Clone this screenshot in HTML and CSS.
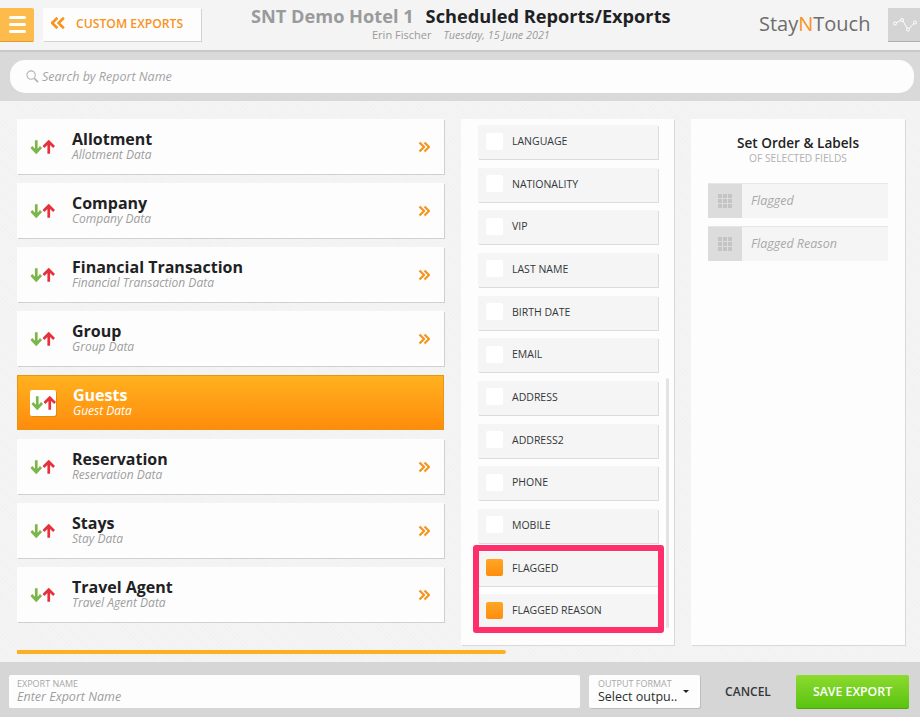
FILE: index.html
```html
<!DOCTYPE html>
<html lang="en">
<head>
<meta charset="utf-8">
<title>Scheduled Reports/Exports</title>
<link rel="stylesheet" href="styles.css">
</head>
<body>
<svg class="defs" width="0" height="0" aria-hidden="true">
  <symbol id="arrows" viewBox="0 0 26 16">
    <path d="M6.500 1v12M1.500 8l5 5.500 5-5.500" fill="none" stroke="#7ab648" stroke-width="2.800"/>
    <path d="M19.500 15V2.500M14 8l5.500-5.500L25 8" fill="none" stroke="#e8303a" stroke-width="2.800"/>
  </symbol>
  <symbol id="chev" viewBox="0 0 12 12">
    <path d="M1.500 1.500 6 6l-4.500 4.500M6.500 1.500 11 6l-4.500 4.500" fill="none" stroke="#f7931e" stroke-width="2.200"/>
  </symbol>
  <symbol id="grip" viewBox="0 0 14 14">
    <path d="M0 0h4v4H0zM5 0h4v4H5zM10 0h4v4h-4zM0 5h4v4H0zM5 5h4v4H5zM10 5h4v4h-4zM0 10h4v4H0zM5 10h4v4H5zM10 10h4v4h-4z" fill="#c4c4c4"/>
  </symbol>
</svg>
<div class="app">
  <header class="top">
    <button class="menu" aria-label="Menu"><span></span><span></span><span></span></button>
    <button class="back">
      <svg class="back-icon" viewBox="0 0 12 12"><path d="M5.500 1.500 1 6l4.500 4.500M11 1.500 6.500 6l4.500 4.500" fill="none" stroke="#f7931e" stroke-width="2.200"/></svg>
      <span>CUSTOM EXPORTS</span>
    </button>
    <div class="title-block">
      <div class="titles"><span class="hotel">SNT Demo Hotel 1</span><span class="page-title">Scheduled Reports/Exports</span></div>
      <div class="sub"><span class="user">Erin Fischer</span><span class="date">Tuesday, 15 June 2021</span></div>
    </div>
    <div class="logo">Stay<span class="logo-n">N</span>Touch</div>
    <button class="pulse" aria-label="Activity">
      <svg viewBox="0 0 24 14" width="24" height="14"><path d="M2 5.500 9 1.500l6 10 7-7" fill="none" stroke="#fff" stroke-width="1"/><g fill="#d4d4d4" stroke="#fff" stroke-width="1"><circle cx="2" cy="5.500" r="1.500"/><circle cx="9" cy="2" r="1.500"/><circle cx="15" cy="11.500" r="1.500"/><circle cx="22" cy="4.500" r="1.500"/></g></svg>
    </button>
  </header>

  <div class="search-band">
    <div class="search">
      <svg class="search-icon" viewBox="0 0 14 14"><circle cx="5.500" cy="5.500" r="4.500" fill="none" stroke="#b5b5b5" stroke-width="1.200"/><path d="M9 9l4 4" stroke="#b5b5b5" stroke-width="2"/></svg>
      <span>Search by Report Name</span>
    </div>
  </div>

  <main class="main">
    <div class="columns">
      <section class="reports">
        <a class="report"><svg class="arrows"><use href="#arrows"/></svg><div class="report-text"><h3>Allotment</h3><p>Allotment Data</p></div><svg class="chev"><use href="#chev"/></svg></a>
        <a class="report"><svg class="arrows"><use href="#arrows"/></svg><div class="report-text"><h3>Company</h3><p>Company Data</p></div><svg class="chev"><use href="#chev"/></svg></a>
        <a class="report"><svg class="arrows"><use href="#arrows"/></svg><div class="report-text"><h3>Financial Transaction</h3><p>Financial Transaction Data</p></div><svg class="chev"><use href="#chev"/></svg></a>
        <a class="report"><svg class="arrows"><use href="#arrows"/></svg><div class="report-text"><h3>Group</h3><p>Group Data</p></div><svg class="chev"><use href="#chev"/></svg></a>
        <a class="report active"><span class="arrow-box"><svg class="arrows"><use href="#arrows"/></svg></span><div class="report-text"><h3>Guests</h3><p>Guest Data</p></div></a>
        <a class="report"><svg class="arrows"><use href="#arrows"/></svg><div class="report-text"><h3>Reservation</h3><p>Reservation Data</p></div><svg class="chev"><use href="#chev"/></svg></a>
        <a class="report"><svg class="arrows"><use href="#arrows"/></svg><div class="report-text"><h3>Stays</h3><p>Stay Data</p></div><svg class="chev"><use href="#chev"/></svg></a>
        <a class="report"><svg class="arrows"><use href="#arrows"/></svg><div class="report-text"><h3>Travel Agent</h3><p>Travel Agent Data</p></div><svg class="chev"><use href="#chev"/></svg></a>
      </section>

      <section class="fields">
        <div class="field"><i class="check"></i>LANGUAGE</div>
        <div class="field"><i class="check"></i>NATIONALITY</div>
        <div class="field"><i class="check"></i>VIP</div>
        <div class="field"><i class="check"></i>LAST NAME</div>
        <div class="field"><i class="check"></i>BIRTH DATE</div>
        <div class="field"><i class="check"></i>EMAIL</div>
        <div class="field"><i class="check"></i>ADDRESS</div>
        <div class="field"><i class="check"></i>ADDRESS2</div>
        <div class="field"><i class="check"></i>PHONE</div>
        <div class="field"><i class="check"></i>MOBILE</div>
        <div class="field"><i class="check on"></i>FLAGGED</div>
        <div class="field"><i class="check on"></i>FLAGGED REASON</div>
        <div class="scrollbar"></div>
        <div class="highlight"></div>
      </section>

      <section class="order">
        <h2>Set Order &amp; Labels</h2>
        <p class="order-sub">OF SELECTED FIELDS</p>
        <div class="label-row"><span class="grip"><svg><use href="#grip"/></svg></span><span class="label-text">Flagged</span></div>
        <div class="label-row"><span class="grip"><svg><use href="#grip"/></svg></span><span class="label-text">Flagged Reason</span></div>
      </section>
    </div>
    <div class="progress"></div>
  </main>

  <footer class="bottom">
    <div class="name-input"><small>EXPORT NAME</small><em>Enter Export Name</em></div>
    <div class="format"><small>OUTPUT FORMAT</small><span>Select outpu..</span><i class="caret"></i></div>
    <button class="cancel">CANCEL</button>
    <button class="save">SAVE EXPORT</button>
  </footer>
</div>
</body>
</html>
```
FILE: styles.css
```css
* { box-sizing: border-box; }
html, body { margin: 0; padding: 0; }
body {
  width: 920px;
  height: 717px;
  overflow: hidden;
  font-family: "Open Sans", "Noto Sans", sans-serif;
  background: #f4f4f4;
  color: #1f2224;
}
.defs { position: absolute; }
button { font-family: inherit; border: 0; padding: 0; }
.app { display: flex; flex-direction: column; height: 717px; }

/* header */
.top {
  height: 52px;
  flex: none;
  display: flex;
  align-items: flex-start;
  background: #f4f4f4;
  border-bottom: 2px solid #c9c9c9;
}
.menu {
  width: 34px;
  height: 34px;
  margin-top: 8px;
  background: #fdbb4c;
  border-bottom: 1px solid #dc9a2c;
  border-radius: 0 2px 2px 0;
  display: flex;
  flex-direction: column;
  align-items: center;
  justify-content: center;
  gap: 4px;
  flex: none;
}
.menu span { width: 17px; height: 3px; background: #fff; border-radius: 2px; }
.back {
  width: 158px;
  height: 33px;
  margin: 8px 0 0 9px;
  background: #fdfdfd;
  box-shadow: 1px 1px 0 #d2d2d2;
  display: flex;
  align-items: center;
  padding: 0 0 3px 8px;
  font-size: 12.200px;
  font-weight: 600;
  color: #f7931e;
  gap: 11px;
  flex: none;
}
.back-icon { width: 14px; height: 14px; flex: none; }
.title-block { width: 511px; flex: none; padding: 5px 0 0 50px; }
.titles { display: flex; gap: 12px; line-height: 23px; font-size: 18.200px; font-weight: 700; white-space: nowrap; }
.hotel { color: #9a9a9a; }
.page-title { color: #1f2224; }
.sub { display: flex; gap: 12px; font-size: 11px; line-height: 13px; color: #9a9a9a; padding-left: 121px; white-space: nowrap; }
.date { font-style: italic; font-size: 10.800px; }
.logo { width: 114px; margin: 10px 0 0 47px; font-size: 20px; line-height: 28px; color: #6d6d6d; white-space: nowrap; flex: none; }
.logo-n { color: #f7931e; }
.pulse {
  width: 32px;
  height: 34px;
  margin: 8px 0 0 auto;
  background: #d4d4d4;
  border-bottom: 1px solid #b0b0b0;
  display: flex;
  align-items: center;
  padding-left: 5px;
  flex: none;
}

/* search */
.search-band { height: 49px; flex: none; background: #d9d9d9; padding: 8px 6px 0 10px; }
.search {
  height: 33px;
  background: #fdfdfd;
  border-radius: 15px;
  display: flex;
  align-items: center;
  padding-left: 16px;
  gap: 3px;
  font-size: 12.500px;
  font-style: italic;
  color: #a3a3a3;
}
.search-icon { width: 13px; height: 13px; }

/* main */
.main {
  flex: 1;
  padding: 18px 15px 0 17px;
  background: #f4f4f4;
  background-image: repeating-linear-gradient(45deg, rgba(0,0,0,.012) 0 1px, transparent 1px 3px);
}
.columns { display: flex; height: 526px; }
.reports { width: 427px; flex: none; display: flex; flex-direction: column; gap: 9px; }
.report {
  height: 55px;
  flex: none;
  background: #fdfdfd;
  box-shadow: 1px 1px 0 #d0d0d0;
  display: flex;
  align-items: center;
  padding: 0 0 2px 13px;
}
.arrows { width: 25px; height: 16px; flex: none; }
.report-text { margin-left: 17px; flex: 1; }
.report-text h3 { margin: 0; font-size: 16px; line-height: 18px; font-weight: 700; color: #1f2224; }
.report-text p { margin: 0; font-size: 12px; line-height: 13px; font-style: italic; color: #9d9d9d; }
.chev { width: 12px; height: 12px; margin: 2px 14px 0 0; flex: none; }
.report > .arrows { margin-top: 2px; }
.report.active {
  background: linear-gradient(#ffb11f, #ff8c0c);
  border: 1px solid #e8960e;
  box-shadow: none;
  padding: 0 0 2px 12px;
}
.arrow-box {
  width: 26px;
  height: 26px;
  background: #fff;
  border-radius: 2px;
  box-shadow: 1px 1px 0 #e08a10;
  display: flex;
  align-items: center;
  justify-content: center;
  flex: none;
  margin-top: 2px;
}
.report.active h3 { color: #fff; }
.report.active p { color: #fff; }

.fields {
  width: 213px;
  height: 526px;
  flex: none;
  margin-left: 17px;
  padding: 6px 16px 0 17px;
  background: #fdfdfd;
  box-shadow: 1px 1px 0 #d8d8d8;
  position: relative;
  overflow: hidden;
}
.field {
  height: 34px;
  margin-bottom: 8.670px;
  background: #f5f5f5;
  box-shadow: 1px 1px 0 #dcdcdc;
  display: flex;
  align-items: center;
  padding: 0 0 2px 8px;
  font-size: 10.500px;
  color: #33373a;
}
.check {
  width: 17px;
  height: 17px;
  margin-right: 9px;
  background: #fff;
  border-radius: 2px;
  flex: none;
}
.check.on { background: linear-gradient(#ffa726, #ff8c0c); }
.scrollbar { position: absolute; left: 205px; top: 259px; width: 3px; height: 250px; background: #e3e3e3; border-radius: 2px; }
.highlight {
  position: absolute;
  left: 12px;
  top: 426px;
  width: 191px;
  height: 88px;
  border: 6px solid #ff2f6c;
  border-radius: 3px;
}

.order {
  width: 214px;
  height: 526px;
  flex: none;
  margin-left: 17px;
  padding: 14px 17px 0;
  background: #fdfdfd;
  box-shadow: 1px 1px 0 #d8d8d8;
}
.order h2 { margin: 0; font-size: 13.600px; line-height: 19px; font-weight: 600; text-align: center; color: #1f2224; }
.order-sub { margin: 0 0 18px; font-size: 10.200px; line-height: 13px; text-align: center; color: #b0b0b0; }
.label-row { height: 35px; margin-bottom: 8px; display: flex; background: #f5f5f5; border-top: 1px solid #e6e6e6; }
.grip { width: 34px; background: #dcdcdc; display: flex; align-items: center; justify-content: center; }
.grip svg { width: 14px; height: 14px; }
.label-text { padding-left: 9px; font-size: 12.500px; line-height: 33px; font-style: italic; color: #a8a8a8; }

.progress { width: 489px; height: 4px; margin-top: 5px; background: #fdb022; border-radius: 0 2px 2px 0; }

/* footer */
.bottom {
  height: 55px;
  flex: none;
  background: #d6d6d6;
  display: flex;
  align-items: center;
  padding: 4px 11px 0 9px;
}
.name-input, .format {
  height: 33px;
  background: #fdfdfd;
  border-radius: 2px;
  display: flex;
  flex-direction: column;
  padding: 3px 8px 0;
  position: relative;
}
.name-input { width: 571px; }
.format { width: 111px; margin-left: 9px; box-shadow: 1px 1px 0 #bdbdbd; padding-left: 9px; }
.bottom small { font-size: 9px; line-height: 11px; color: #a8a8a8; }
.name-input em { font-size: 12.500px; line-height: 15px; color: #9d9d9d; }
.format span { font-size: 12.500px; line-height: 15px; color: #2a2d2f; white-space: nowrap; }
.caret {
  position: absolute;
  right: 11px;
  top: 15px;
  border-left: 3px solid transparent;
  border-right: 3px solid transparent;
  border-top: 3px solid #222;
}
.cancel { width: 96px; background: none; font-size: 12px; font-weight: 600; color: #33373a; text-align: center; }
.save {
  width: 113px;
  height: 34px;
  background: linear-gradient(#8cdb2e, #5ac311);
  border-bottom: 1px solid #4ba50e;
  border-radius: 2px;
  font-size: 12.300px;
  font-weight: 600;
  color: #fff;
}
```
